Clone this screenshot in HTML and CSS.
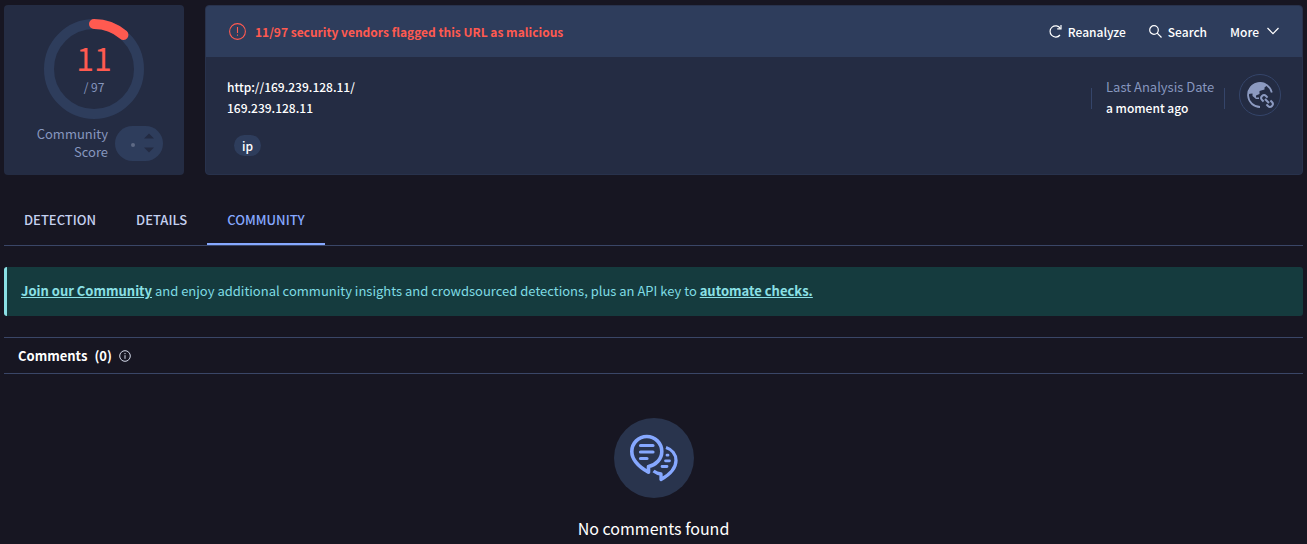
FILE: index.html
```html
<!DOCTYPE html>
<html lang="en">
<head>
<meta charset="utf-8">
<title>URL report - Community</title>
<link rel="stylesheet" href="styles.css">
</head>
<body>
<header class="summary">
  <section class="card score">
    <div class="ring">
      <svg class="ring-art" viewBox="0 0 100 100" fill="none" stroke-width="10" aria-hidden="true">
        <circle cx="50" cy="50" r="45" stroke="#2e3d5c"/>
        <path d="M50 5A45 45 0 0 1 79.4 15.9" stroke="#ff5a50" stroke-linecap="round"/>
      </svg>
      <div class="ring-text">
        <span class="positives">11</span>
        <span class="total">/ 97</span>
      </div>
    </div>
    <div class="votes">
      <span class="votes-label">Community Score</span>
      <div class="pill">
        <span class="dot"></span>
        <svg width="10" height="20" viewBox="0 0 10 20" fill="#232b42" aria-hidden="true"><path d="M0 5.500 5 .5l5 5zM0 14.500h10l-5 5z"/></svg>
      </div>
    </div>
  </section>

  <section class="card report">
    <div class="report-head">
      <svg class="alert" width="17" height="17" viewBox="0 0 17 17" fill="none" stroke="#ff5a50" aria-hidden="true"><circle cx="8.500" cy="8.500" r="7.900" stroke-width="1.100"/><path d="M8.500 4v6M8.500 11.500v1.300" stroke-width="1.100"/></svg>
      <strong class="verdict">11/97 security vendors flagged this URL as malicious</strong>
      <div class="actions">
        <button type="button" class="action">
          <svg width="13" height="14" viewBox="0 0 13 14" fill="none" stroke="currentColor" stroke-width="1.200" aria-hidden="true"><path d="M11.300 4.300A5.600 5.600 0 1 0 11 11"/><path d="M12 1v3.800H8.200"/></svg>
          Reanalyze
        </button>
        <button type="button" class="action">
          <svg width="13" height="13" viewBox="0 0 13 13" fill="none" stroke="currentColor" stroke-width="1.200" aria-hidden="true"><circle cx="5" cy="5" r="4.300"/><path d="m8.200 8.200 4.300 4.300"/></svg>
          Search
        </button>
        <button type="button" class="action more">
          More
          <svg width="12" height="8" viewBox="0 0 12 8" fill="none" stroke="currentColor" stroke-width="1.200" aria-hidden="true"><path d="m.5 1 5.500 5.700L11.500 1"/></svg>
        </button>
      </div>
    </div>
    <div class="report-body">
      <div class="target">
        <div>http://169.239.128.11/</div>
        <div>169.239.128.11</div>
        <a href="#ip" class="tag">ip</a>
      </div>
      <div class="meta">
        <div class="date">
          <span class="date-label">Last Analysis Date</span>
          <span>a moment ago</span>
        </div>
        <div class="globe">
          <svg width="28" height="28" viewBox="0 0 28 28" fill="none" stroke="#8c9ac0" aria-hidden="true">
            <path d="M25.800 11.500A12 12 0 1 0 14 26" stroke-width="1.800"/>
            <path d="M2 13C2.500 6 7.500 1.500 14 1.500c3 0 5.500 1 7.500 2.500L18.500 6.500v2L13.500 10v3l-3.500 1.500v2h3v1.500h-3L6.500 15V12.500z" fill="#8c9ac0" stroke="none"/>
            <g transform="rotate(45 21 20)" stroke-width="2"><path d="M19 22.800h-2.200a2.800 2.800 0 0 1 0-5.600H19M23 17.200h2.200a2.800 2.800 0 0 1 0 5.600H23M18.200 20h5.600"/></g>
          </svg>
        </div>
      </div>
    </div>
  </section>
</header>

<nav class="tabs">
  <a href="#detection" class="tab">DETECTION</a>
  <a href="#details" class="tab">DETAILS</a>
  <a href="#community" class="tab active" aria-current="page">COMMUNITY</a>
</nav>

<main>
  <p class="banner"><a href="#join">Join our Community</a> and enjoy additional community insights and crowdsourced detections, plus an API key to <a href="#api">automate checks.</a></p>
  <h2 class="comments-head">
    <span>Comments</span><span>(0)</span>
    <svg width="12" height="12" viewBox="0 0 12 12" fill="none" stroke="#d5daea" aria-hidden="true"><circle cx="6" cy="6" r="5.300"/><path d="M6 5.200v3.600M6 3v1.200"/></svg>
  </h2>
  <div class="empty">
    <div class="empty-icon">
      <svg width="48" height="48" viewBox="0 0 48 48" fill="none" stroke="#86a8ff" stroke-width="3.600" stroke-linejoin="round" aria-hidden="true">
        <path d="M18.500 38.300C11 34 1.800 27.500 1.800 17.500A15 15 0 0 1 31.800 17.500C31.800 25 26 31 18.500 32.500z"/>
        <path d="M10.500 11.500h12.500M10.500 18h12.500M10.500 24.500h6.500" stroke-width="3.200" stroke-linecap="round"/>
        <path d="M36 13.500c6 2 10 7 10 13 0 8.500-7 14.500-15 19v-5.500q-4-.3-7.500-3" stroke-width="3.300"/>
        <path d="M37 21.200h1M35.500 26.800h4M32 32.500h5" stroke-width="2.800" stroke-linecap="round"/>
      </svg>
    </div>
    <p class="empty-text">No comments found</p>
  </div>
</main>
</body>
</html>
```

FILE: styles.css
```css
* { box-sizing: border-box; }

body {
  margin: 0;
  padding: 5px 4px 0;
  background: #171622;
  color: #fff;
  font: 500 13px/21px "Noto Sans CJK SC", "Noto Sans", sans-serif;
}

svg { display: block; flex: none; }
a { color: inherit; }

.summary { display: flex; gap: 21px; }
.card { background: #242c43; border-radius: 4px; min-height: 170px; }

.score {
  flex: 0 0 180px;
  padding: 14px 21px 0;
  display: flex;
  flex-direction: column;
  align-items: center;
  gap: 6px;
}
.ring { display: grid; width: 100px; height: 100px; }
.ring-art, .ring-text { grid-area: 1 / 1; }
.ring-text {
  display: flex;
  flex-direction: column;
  align-items: center;
  padding-top: 18px;
}
.positives { color: #ff5a50; font-size: 32px; line-height: 40px; font-weight: 400; }
.total { color: #8797bf; font-size: 12px; line-height: 20px; font-weight: 400; }
.votes { display: flex; align-items: center; gap: 7px; align-self: flex-end; }
.votes-label { width: 76px; text-align: right; line-height: 18px; color: #8797bf; font-weight: 400; }
.pill {
  width: 48px;
  height: 35px;
  border-radius: 18px;
  background: #2e3d5c;
  display: flex;
  align-items: center;
  justify-content: flex-end;
  gap: 9px;
  padding-right: 9px;
}
.dot { width: 4px; height: 4px; border-radius: 50%; background: #5e6a85; margin-top: 3px; }

.report { flex: 1; border: 1px solid #28324c; overflow: hidden; font-size: 12px; }
.report-head {
  display: flex;
  align-items: center;
  min-height: 51px;
  padding: 0 23px 1px;
  background: #2e3d5c;
}
.verdict { margin-left: 9px; color: #ff5a50; font-weight: 700; }
.actions { display: flex; gap: 23px; margin-left: auto; }
.action {
  display: flex;
  align-items: center;
  gap: 6px;
  padding: 0;
  border: 0;
  background: none;
  color: inherit;
  font: inherit;
  cursor: pointer;
}
.more { gap: 8px; }

.report-body { display: flex; justify-content: space-between; padding: 19px 21px 0; }
.tag {
  display: inline-block;
  margin: 17px 0 0 7px;
  padding: 0 8px;
  border-radius: 11px;
  background: #2e3d5c;
  text-decoration: none;
}
.meta { display: flex; align-items: flex-start; gap: 14px; }
.date { display: flex; align-items: center; flex-wrap: wrap; width: 134px; padding: 0 14px; border: solid #35456a; border-width: 0 1px; border-image: linear-gradient(transparent 12px, #35456a 12px, #35456a 32px, transparent 32px) 1; }
.date span { white-space: nowrap; }
.date-label { color: #8797bf; font-size: 13px; font-weight: 400; }
.globe {
  display: grid;
  place-items: center;
  width: 42px;
  height: 42px;
  margin-top: -2px;
  border: 1px solid #35456a;
  border-radius: 50%;
}

.tabs { display: flex; margin-top: 21px; border-bottom: 1px solid #3a4667; }
.tab {
  padding: 13px 20px;
  border-bottom: 2px solid transparent;
  color: #c5d1f0;
  text-decoration: none;
}
.tab.active { color: #86a8ff; border-color: #86a8ff; }

.banner {
  margin: 21px 0;
  padding: 13px 14px 15px;
  border-left: 3px solid #8be0e5;
  border-radius: 3px;
  background: #153b3e;
  color: #7fdce4;
  font-weight: 400;
}
.banner a { font-weight: 700; color: #8be0e5; }

.comments-head {
  display: flex;
  align-items: center;
  gap: 7px;
  margin: 0;
  padding: 7px 14px;
  border: solid #3a4667;
  border-width: 1px 0;
  font-size: 13px;
  font-weight: 700;
}

.empty { display: flex; flex-direction: column; align-items: center; padding-top: 44px; }
.empty-icon {
  display: grid;
  place-items: center;
  width: 80px;
  height: 80px;
  border-radius: 50%;
  background: #29344d;
}
.empty-text { margin: 18px 0 0; font-size: 16px; line-height: 24px; font-weight: 400; }
```
